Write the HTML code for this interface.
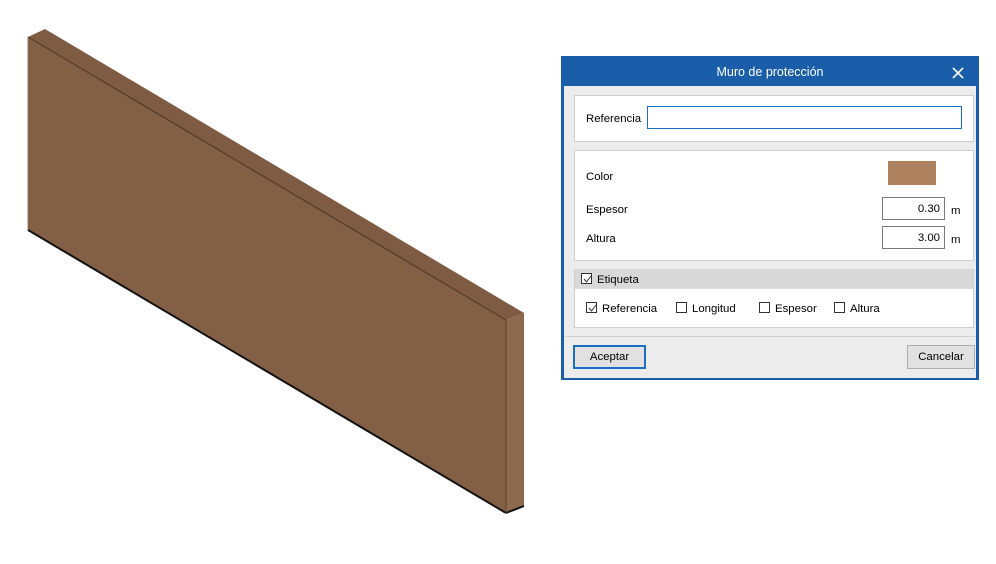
<!DOCTYPE html>
<html><head><style>
body{margin:0;width:996px;height:564px;background:#fff;position:relative;overflow:hidden;font-family:"Liberation Sans",sans-serif;font-size:11.4px;line-height:14px;color:#000}
.a{position:absolute}
.dlg{left:561px;top:56px;width:418px;height:324px;background:#1a5da8}
.body{left:564px;top:86px;width:412px;height:292px;background:#ececec}
.pan{background:#fff;border:1px solid #cfcfcf;box-sizing:border-box}
.inp{background:#fff;border:1px solid #7a7a7a;box-sizing:border-box;text-align:right;padding-right:4px;line-height:22px}
.cb{width:11px;height:11px;border:1px solid #333;background:#fff;box-sizing:border-box}
.cb svg{position:absolute;left:0;top:0}
.btn{background:#e1e1e1;border:1px solid #adadad;box-sizing:border-box;text-align:center;line-height:22px}
</style></head><body>
<svg class="a" style="left:0;top:0" width="560" height="564">
<polygon points="28,37 506,320 506,513 28,230" fill="#835f45"/>
<polygon points="28,37 45,29 524,313 506,320" fill="#7e5b42"/>
<polygon points="506,320 524,313 524,506 506,513" fill="#8d6a4e"/>
<line x1="28" y1="37" x2="506" y2="320" stroke="#4a3526" stroke-width="1"/>
<line x1="28" y1="230" x2="506" y2="513" stroke="#111" stroke-width="2"/>
<line x1="506" y1="513" x2="524" y2="506" stroke="#111" stroke-width="2"/>
<line x1="506" y1="320" x2="506" y2="513" stroke="#5e4432" stroke-width="1"/>
<line x1="28" y1="37" x2="28" y2="230" stroke="#9a7a62" stroke-width="1"/>
</svg>
<div class="a dlg"></div>
<div class="a" style="left:561px;top:58px;width:418px;text-align:center;color:#fff;font-size:12.5px;line-height:28px">Muro de protección</div>
<svg class="a" style="left:952px;top:67px" width="12" height="12"><path d="M1 1L11 11M11 1L1 11" stroke="#fff" stroke-width="1.6"/></svg>
<div class="a body"></div>
<div class="a pan" style="left:574px;top:95px;width:400px;height:47px"></div>
<div class="a" style="left:586px;top:112px">Referencia</div>
<div class="a" style="left:647px;top:106px;width:315px;height:23px;border:1px solid #1a6fc4;background:#fff;box-sizing:border-box"></div>
<div class="a pan" style="left:574px;top:150px;width:400px;height:111px"></div>
<div class="a" style="left:586px;top:170px">Color</div>
<div class="a" style="left:888px;top:161px;width:48px;height:24px;background:#ae825f"></div>
<div class="a" style="left:586px;top:203px">Espesor</div>
<div class="a inp" style="left:882px;top:197px;width:63px;height:23px">0.30</div>
<div class="a" style="left:951px;top:204px">m</div>
<div class="a" style="left:586px;top:232px">Altura</div>
<div class="a inp" style="left:882px;top:226px;width:63px;height:23px">3.00</div>
<div class="a" style="left:951px;top:233px">m</div>
<div class="a pan" style="left:574px;top:269px;width:400px;height:59px"></div>
<div class="a" style="left:575px;top:269px;width:398px;height:20px;background:#d9d9d9"></div>
<div class="a cb" style="left:581px;top:273px"><svg width="11" height="11"><path d="M2 5L4.5 8L9 2" stroke="#333" fill="none"/></svg></div>
<div class="a" style="left:597px;top:273px">Etiqueta</div>
<div class="a cb" style="left:586px;top:302px"><svg width="11" height="11"><path d="M2 5L4.5 8L9 2" stroke="#333" fill="none"/></svg></div>
<div class="a" style="left:602px;top:302px">Referencia</div>
<div class="a cb" style="left:676px;top:302px"></div>
<div class="a" style="left:692px;top:302px">Longitud</div>
<div class="a cb" style="left:759px;top:302px"></div>
<div class="a" style="left:775px;top:302px">Espesor</div>
<div class="a cb" style="left:834px;top:302px"></div>
<div class="a" style="left:850px;top:302px">Altura</div>
<div class="a" style="left:565px;top:336px;width:410px;height:1px;background:#d0d0d0"></div>
<div class="a btn" style="left:573px;top:345px;width:73px;height:24px;border:2px solid #1a6fc4;line-height:20px">Aceptar</div>
<div class="a btn" style="left:907px;top:345px;width:68px;height:24px">Cancelar</div>
</body></html>
